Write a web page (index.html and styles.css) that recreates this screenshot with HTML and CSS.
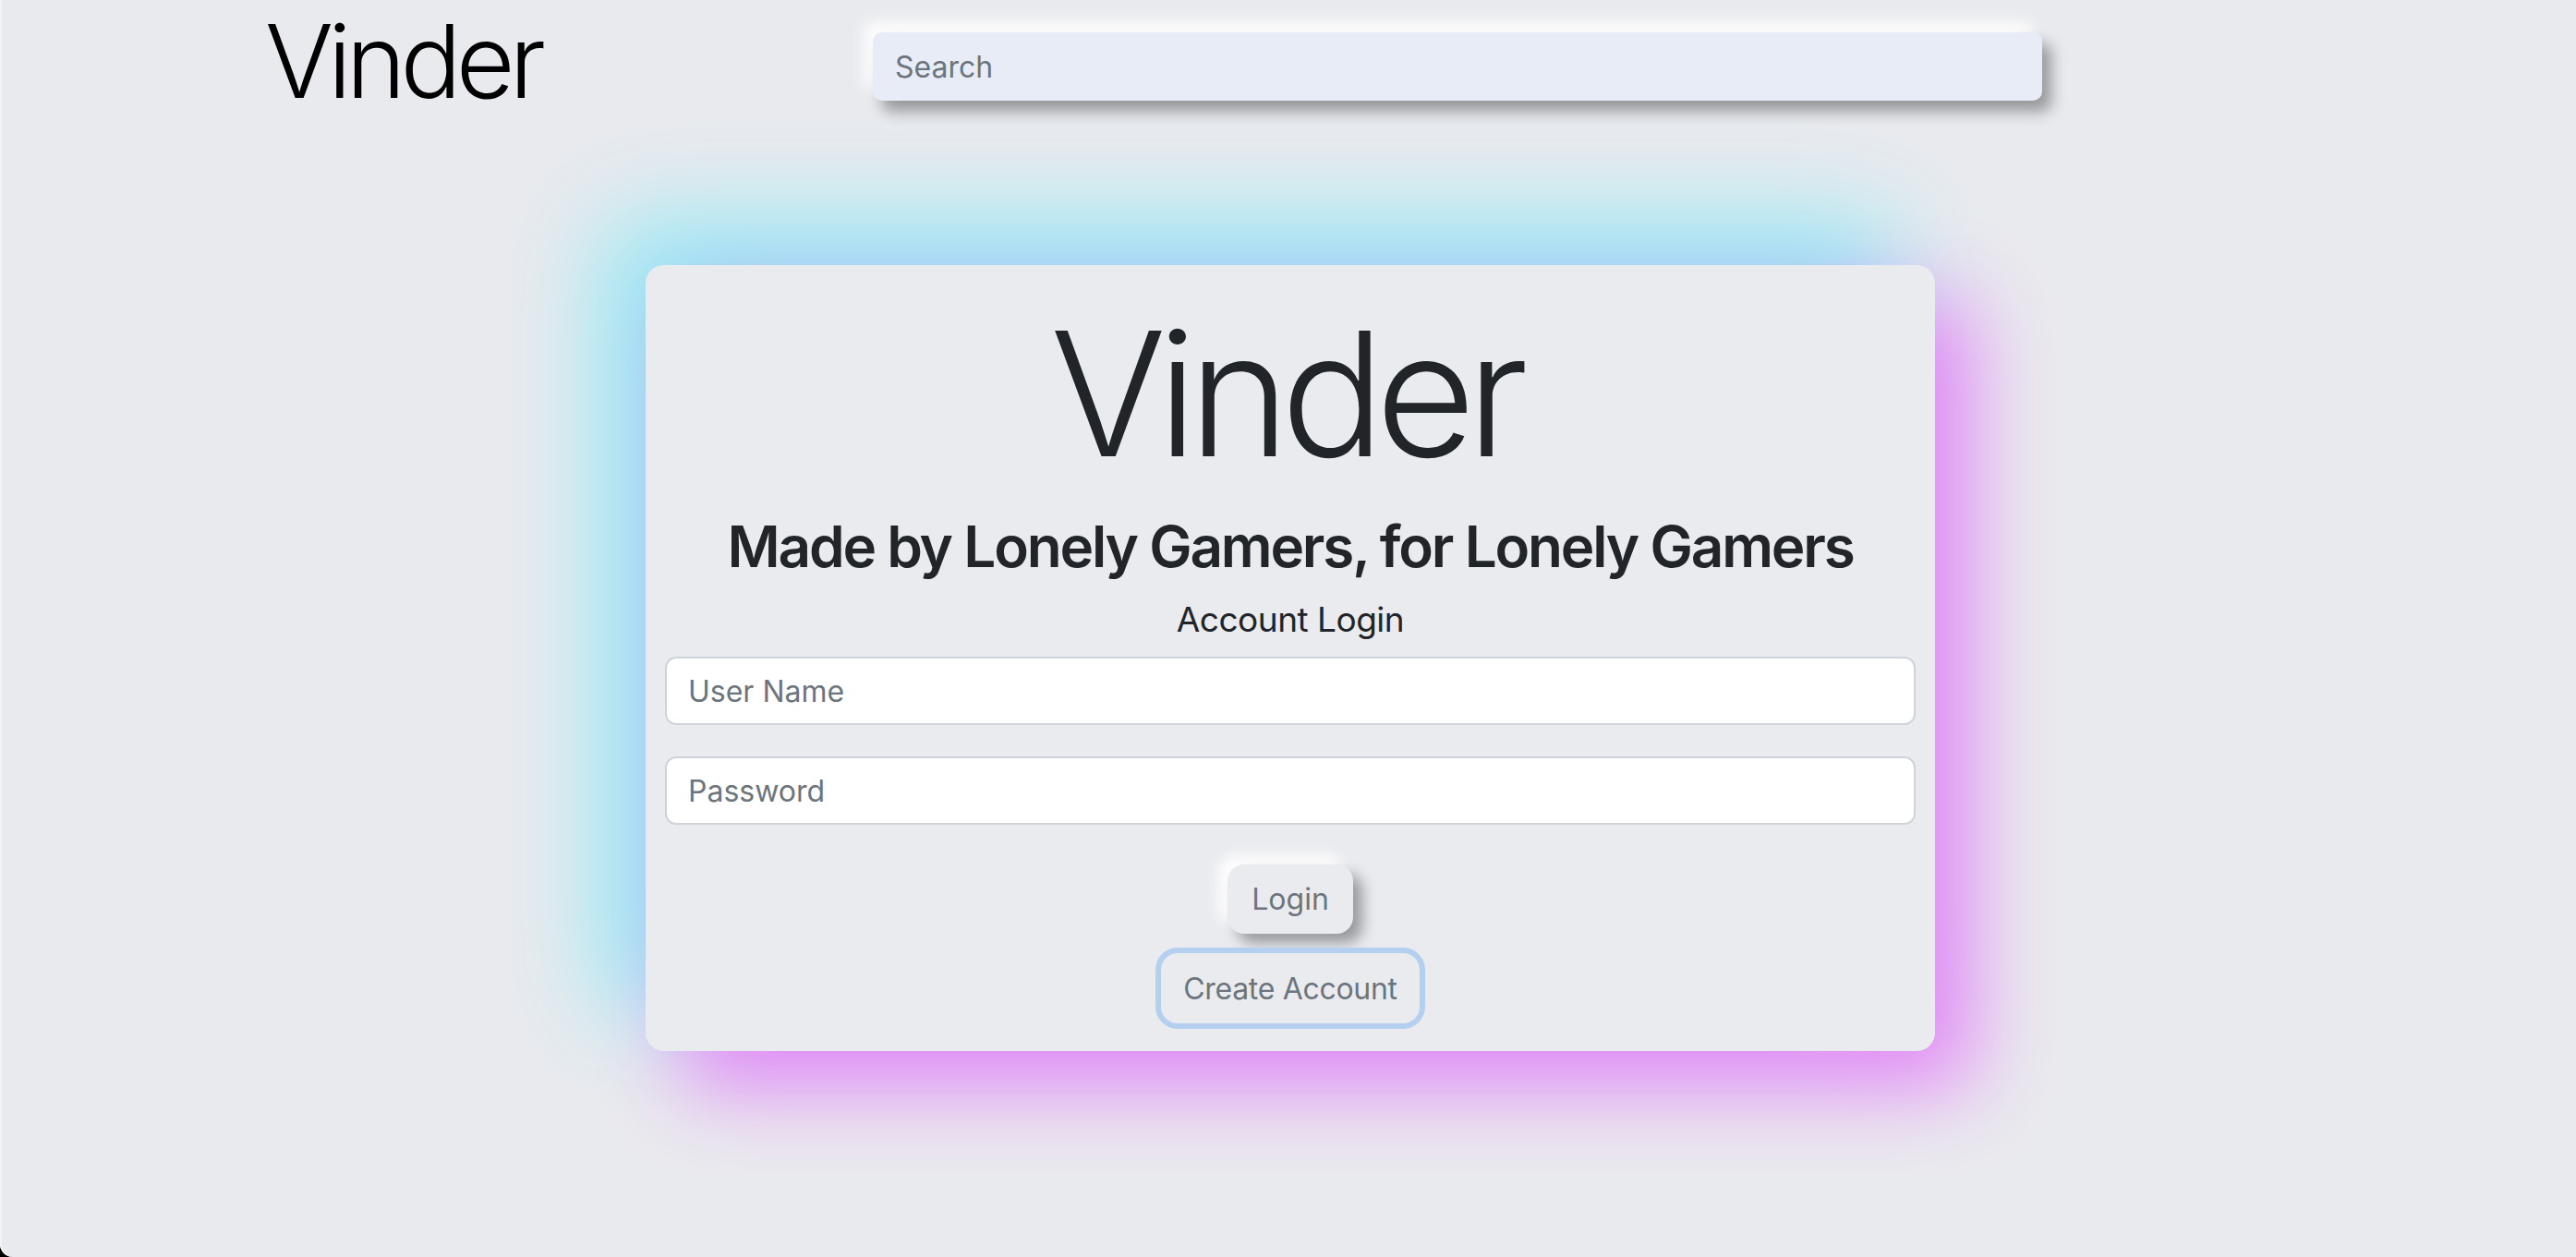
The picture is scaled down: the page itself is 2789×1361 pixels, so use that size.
FILE: index.html
```html
<!DOCTYPE html>
<html lang="en">
<head>
<meta charset="utf-8">
<title>Vinder</title>
<link rel="stylesheet" href="styles.css">
</head>
<body>
<header class="topbar">
  <h1 class="brand">Vinder</h1>
  <input class="search" type="text" placeholder="Search">
</header>
<main class="stage">
  <section class="card">
    <h1 class="card-title">Vinder</h1>
    <h2 class="tagline">Made by Lonely Gamers, for Lonely Gamers</h2>
    <h5 class="login-label">Account Login</h5>
    <form class="login-form">
      <input class="field" type="text" placeholder="User Name">
      <input class="field" type="password" placeholder="Password">
      <div class="actions">
        <button type="button" class="btn btn-login">Login</button>
        <button type="button" class="btn btn-create">Create Account</button>
      </div>
    </form>
  </section>
</main>
</body>
</html>
```

FILE: styles.css
```css
* { box-sizing: border-box; }

html {
  margin: 0;
  padding: 0;
  background: #000;
}

body {
  margin: 0;
  padding: 0;
  width: 2789px;
  height: 1361px;
  overflow: hidden;
  background: #e9eaee;
  border-radius: 0 0 0 14px;
  box-shadow: inset 2px 0 0 #f2f3f5;
  font-family: Inter, "Noto Sans", "Liberation Sans", sans-serif;
  color: #212529;
}

.topbar {
  display: flex;
  align-items: flex-start;
  padding-left: 287px;
  height: 132px;
}

.brand {
  margin: 0;
  width: 658px;
  font-size: 110px;
  line-height: 1.2;
  font-weight: 300;
  color: #000;
  letter-spacing: -6px;
}

.search {
  margin-top: 35px;
  width: 1266px;
  height: 74px;
  border: none;
  border-radius: 10px;
  background: #e8ecf7;
  padding: 0 24px;
  font-family: inherit;
  font-size: 32px;
  color: #212529;
  outline: none;
  box-shadow: 10px 12px 16px rgba(0, 0, 0, 0.35), -10px -12px 16px rgba(255, 255, 255, 0.9);
}
.search::placeholder { color: #6c757d; }

.stage {
  padding-top: 155px;
  display: flex;
  justify-content: center;
  padding-left: 5px;
}

.card {
  width: 1396px;
  background: #eaebef;
  border-radius: 20px;
  padding: 27px 21px 30px;
  text-align: center;
  box-shadow: 40px 40px 90px rgb(228, 135, 246), -45px -45px 110px rgb(140, 232, 245);
}

.card-title {
  margin: 0;
  padding-right: 12px;
  font-size: 187px;
  line-height: 1.2;
  font-weight: 300;
  letter-spacing: -10px;
}

.tagline {
  margin: 17px 0 0;
  font-size: 62px;
  line-height: 1.2;
  font-weight: 600;
  letter-spacing: -2.2px;
}

.login-label {
  margin: 19px 0 0;
  font-size: 37px;
  line-height: 1.2;
  font-weight: 400;
  letter-spacing: -0.5px;
}

.login-form {
  margin-top: 18px;
  display: flex;
  flex-direction: column;
  gap: 34px;
}

.field {
  width: 100%;
  height: 74px;
  border: 2px solid #ced4da;
  border-radius: 12px;
  background: #fff;
  padding: 0 23px;
  font-family: inherit;
  font-size: 32px;
  color: #212529;
  outline: none;
}
.field::placeholder { color: #6c757d; }

.actions {
  margin-top: 9px;
  display: flex;
  flex-direction: column;
  align-items: center;
  gap: 21px;
}

.btn {
  display: inline-flex;
  align-items: center;
  justify-content: center;
  border: none;
  background: #eaebef;
  color: #6c757d;
  font-family: inherit;
  font-size: 32px;
  border-radius: 18px;
  padding: 0 26px;
  cursor: pointer;
}

.btn-login {
  height: 75px;
  box-shadow: 10px 10px 15px rgba(0, 0, 0, 0.35), -10px -10px 15px rgba(255, 255, 255, 0.95);
}

.btn-create {
  height: 76px;
  padding: 0 24px;
  letter-spacing: -0.3px;
  box-shadow: 0 0 0 6px #b5cff0;
}
```
